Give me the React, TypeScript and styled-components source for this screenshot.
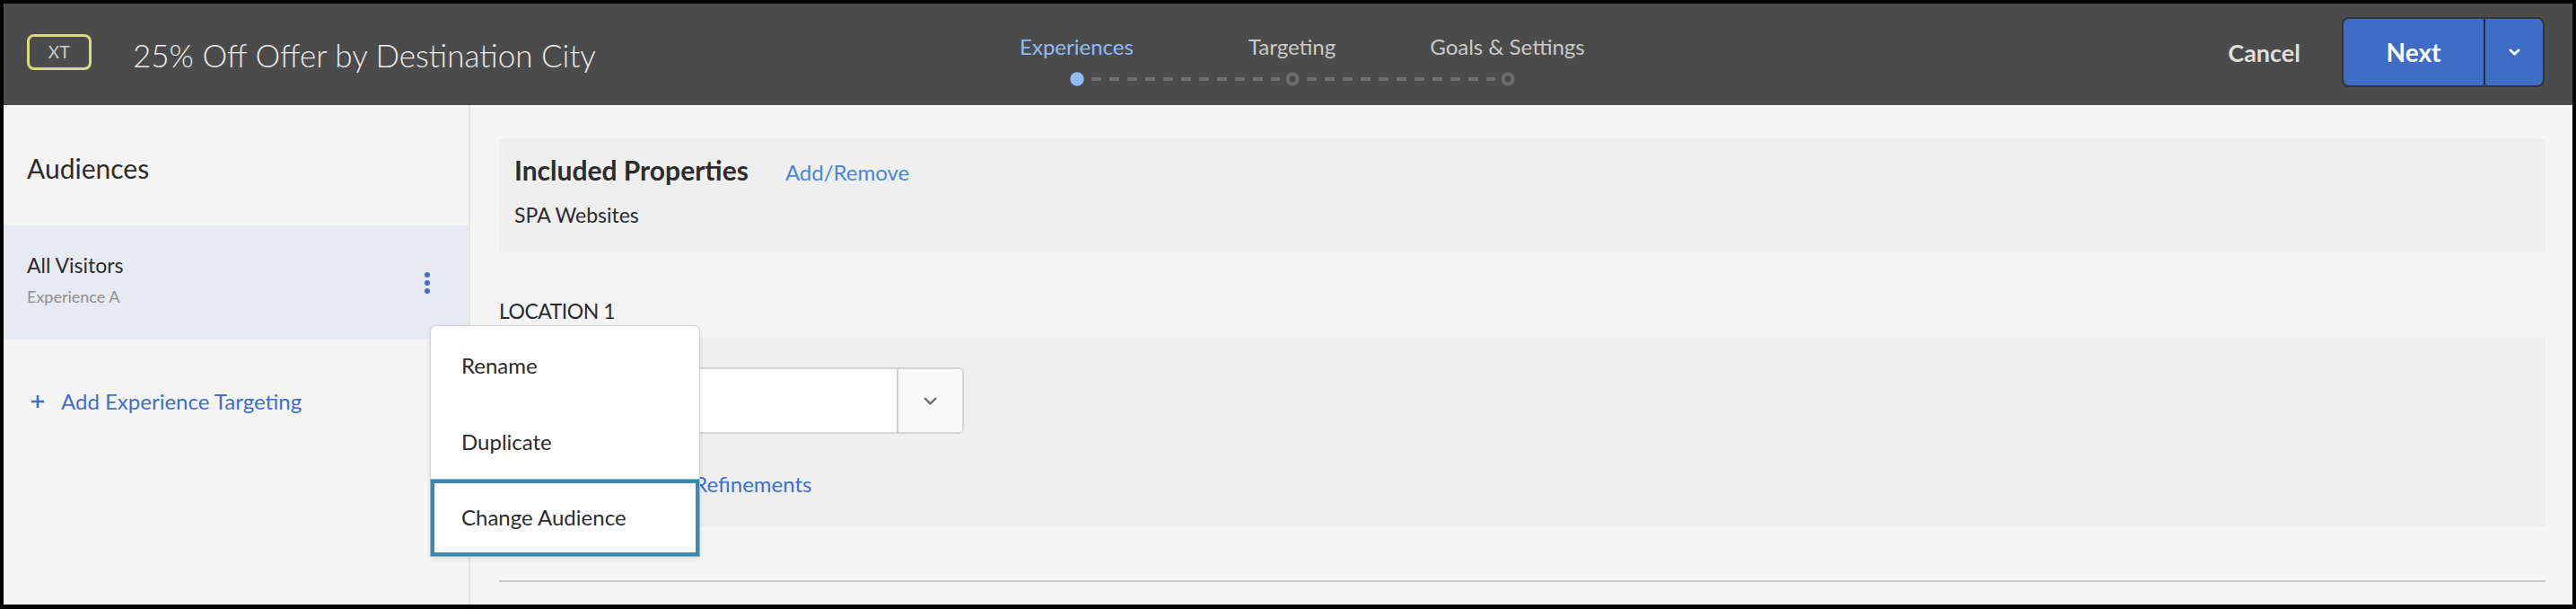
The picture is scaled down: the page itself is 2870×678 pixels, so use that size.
import styled, { createGlobalStyle } from "styled-components";

const GlobalStyle = createGlobalStyle`
  html, body {
    margin: 0;
    padding: 0;
  }
  body {
    background: #000;
    font-family: Lato, "Open Sans", sans-serif;
    color: #2c2c2c;
  }
  * {
    box-sizing: border-box;
  }
`;

const Frame = styled.div`
  width: 2870px;
  height: 678px;
  border: 4px solid #000;
  border-bottom-width: 5px;
  display: flex;
  flex-direction: column;
  background: #f5f5f5;
`;

const Header = styled.header`
  flex: none;
  height: 113px;
  background: #4b4b4b;
  display: grid;
  grid-template-columns: 1fr auto 1fr;
  align-items: center;
  padding: 0 31px 0 26px;
`;

const Brand = styled.div`
  display: flex;
  align-items: center;
  gap: 46px;
`;

const Badge = styled.div`
  width: 72px;
  height: 40px;
  margin-top: -6px;
  border: 3px solid #d6dc7d;
  border-radius: 8px;
  display: flex;
  align-items: center;
  justify-content: center;
  color: #cfcfcf;
  font-size: 19px;
  letter-spacing: 0.5px;
`;

const Title = styled.h1`
  margin: 0;
  font-size: 35px;
  font-weight: 300;
  color: #ececec;
  white-space: nowrap;
`;

const Stepper = styled.div`
  align-self: start;
  padding-top: 33px;
  margin-left: 14px;
  display: flex;
  flex-direction: column;
  align-items: center;
  gap: 12px;
`;

const StepLabels = styled.div`
  display: grid;
  grid-template-columns: repeat(3, 240px);
`;

const StepLabel = styled.span<{ $active?: boolean }>`
  text-align: center;
  font-size: 24px;
  line-height: 30px;
  color: ${(p) => (p.$active ? "#8fbcf7" : "#c9c9c9")};
  white-space: nowrap;
`;

const Actions = styled.div`
  margin-top: -5px;
  display: flex;
  justify-content: flex-end;
  align-items: center;
  gap: 46px;
`;

const CancelButton = styled.button`
  border: 0;
  background: none;
  padding: 0;
  font-family: inherit;
  font-size: 27px;
  font-weight: 700;
  color: #dedede;
`;

const SplitButton = styled.div`
  display: flex;
  height: 78px;
  border: 2px solid #333;
  border-radius: 8px;
  background: #3e6dc5;
  overflow: hidden;
`;

const SplitMain = styled.div`
  width: 158px;
  display: flex;
  align-items: center;
  justify-content: center;
  color: #fff;
  font-size: 28px;
  font-weight: 700;
  border-right: 2px solid #2c2c2c;
`;

const SplitToggle = styled.div`
  flex: 1;
  width: 64px;
  display: flex;
  align-items: center;
  justify-content: center;
`;

const Body = styled.div`
  flex: 1;
  display: flex;
  position: relative;
  min-height: 0;
`;

const Sidebar = styled.aside`
  flex: none;
  width: 520px;
  border-right: 2px solid #e4e4e4;
  display: flex;
  flex-direction: column;
`;

const SidebarTitle = styled.h2`
  margin: 0;
  height: 134px;
  padding: 52px 26px 0;
  font-size: 30px;
  line-height: 36px;
  font-weight: 400;
  color: #2c2c2c;
`;

const AudienceRow = styled.div<{ $selected?: boolean }>`
  height: 127px;
  padding: 0 42px 0 26px;
  display: flex;
  align-items: center;
  justify-content: space-between;
  background: ${(p) => (p.$selected ? "#e7eaf1" : "transparent")};
`;

const AudienceText = styled.div`
  display: flex;
  flex-direction: column;
  gap: 11px;
  margin-top: -7px;
`;

const AudienceName = styled.span`
  font-size: 23px;
  line-height: 26px;
  color: #2c2c2c;
`;

const AudienceSub = styled.span`
  font-size: 18px;
  line-height: 22px;
  color: #8f8f8f;
`;

const AddLink = styled.a<{ $gap?: number }>`
  display: flex;
  align-items: center;
  gap: ${(p) => p.$gap ?? 20}px;
  color: #3e6fcb;
  font-size: 24px;
  line-height: 30px;
  text-decoration: none;
  white-space: nowrap;
`;

const SidebarAdd = styled.div`
  padding: 54px 0 0 30px;
`;

const Main = styled.main`
  flex: 1;
  padding: 37px 30px 0 32px;
  display: flex;
  flex-direction: column;
`;

const Panel = styled.section<{ $pad: string }>`
  background: #efefef;
  padding: ${(p) => p.$pad};
  display: flex;
  flex-direction: column;
`;

const PanelHead = styled.div`
  display: flex;
  align-items: baseline;
  gap: 41px;
`;

const PanelTitle = styled.h3`
  margin: 0;
  font-size: 30px;
  line-height: 34px;
  font-weight: 700;
  color: #2c2c2c;
`;

const TextLink = styled.a`
  color: #4a86d8;
  font-size: 24px;
  text-decoration: none;
`;

const PanelText = styled.p`
  margin: 18px 0 0;
  font-size: 23px;
  line-height: 30px;
  color: #2c2c2c;
`;

const SectionLabel = styled.h4`
  margin: 51px 0 15px;
  font-size: 23px;
  line-height: 30px;
  font-weight: 400;
  letter-spacing: -0.5px;
  color: #2c2c2c;
`;

const Select = styled.div`
  width: 501px;
  height: 74px;
  border: 2px solid #d3d3d3;
  border-radius: 6px;
  background: #fff;
  display: flex;
  overflow: hidden;
`;

const SelectValue = styled.div`
  flex: 1;
`;

const SelectToggle = styled.div`
  width: 73px;
  border-left: 2px solid #d3d3d3;
  background: #fafafa;
  display: flex;
  align-items: center;
  justify-content: center;
`;

const Refinements = styled.div`
  margin-top: 41px;
  padding-left: 25px;
`;

const Rule = styled.hr`
  margin: 60px 0 0;
  border: 0;
  border-top: 2px solid #cacaca;
`;

const Menu = styled.ul`
  position: absolute;
  left: 476px;
  top: 246px;
  width: 299px;
  margin: 0;
  padding: 1px 0 0;
  list-style: none;
  background: #fff;
  border-radius: 6px 6px 2px 2px;
  box-shadow: 0 0 0 1px #d3d3d3, 0 2px 6px rgba(0, 0, 0, 0.15);
`;

const MenuItem = styled.li<{ $focused?: boolean }>`
  height: 85px;
  display: flex;
  align-items: center;
  padding-left: ${(p) => (p.$focused ? 30 : 34)}px;
  padding-bottom: ${(p) => (p.$focused ? 3 : 0)}px;
  font-size: 24px;
  color: #2c2c2c;
  border: ${(p) => (p.$focused ? "4px solid #3b88b1" : "0")};
  outline: ${(p) => (p.$focused ? "1px solid #8dbcd3" : "none")};
`;

const Chevron = ({ color, w, h, sw }: { color: string; w: number; h: number; sw: number }) => (
  <svg width={w} height={h} viewBox={`0 0 ${w} ${h}`} fill="none">
    <path
      d={`M${sw / 2 + 0.5} ${sw / 2 + 0.5} L${w / 2} ${h - sw / 2 - 0.5} L${w - sw / 2 - 0.5} ${sw / 2 + 0.5}`}
      stroke={color}
      strokeWidth={sw}
      strokeLinecap="round"
      strokeLinejoin="round"
    />
  </svg>
);

const Plus = () => (
  <svg width="16" height="16" viewBox="0 0 16 16">
    <path d="M8 1v14M1 8h14" stroke="#3e6fcb" strokeWidth="2.6" />
  </svg>
);

const Kebab = () => (
  <svg width="8" height="26" viewBox="0 0 8 26">
    <circle cx="4" cy="4" r="3" fill="#3e6fcb" />
    <circle cx="4" cy="13" r="3" fill="#3e6fcb" />
    <circle cx="4" cy="22" r="3" fill="#3e6fcb" />
  </svg>
);

const StepTrack = () => (
  <svg width="720" height="18" viewBox="0 0 720 18">
    <line x1="136" y1="9" x2="346" y2="9" stroke="#6f6f6f" strokeWidth="4" strokeDasharray="11 9" />
    <line x1="376" y1="9" x2="586" y2="9" stroke="#6f6f6f" strokeWidth="4" strokeDasharray="11 9" />
    <circle cx="120" cy="9" r="7.7" fill="#8fbcf7" />
    <circle cx="360" cy="9" r="5.6" fill="#4b4b4b" stroke="#6f6f6f" strokeWidth="3.8" />
    <circle cx="600" cy="9" r="5.6" fill="#4b4b4b" stroke="#6f6f6f" strokeWidth="3.8" />
  </svg>
);

const steps = ["Experiences", "Targeting", "Goals & Settings"];
const menuItems = ["Rename", "Duplicate", "Change Audience"];

export default function App() {
  return (
    <>
      <GlobalStyle />
      <Frame>
        <Header>
          <Brand>
            <Badge>XT</Badge>
            <Title>25% Off Offer by Destination City</Title>
          </Brand>
          <Stepper>
            <StepLabels>
              {steps.map((s, i) => (
                <StepLabel key={s} $active={i === 0}>
                  {s}
                </StepLabel>
              ))}
            </StepLabels>
            <StepTrack />
          </Stepper>
          <Actions>
            <CancelButton>Cancel</CancelButton>
            <SplitButton>
              <SplitMain>Next</SplitMain>
              <SplitToggle>
                <Chevron color="#fff" w={13} h={8} sw={2.6} />
              </SplitToggle>
            </SplitButton>
          </Actions>
        </Header>
        <Body>
          <Sidebar>
            <SidebarTitle>Audiences</SidebarTitle>
            <AudienceRow $selected>
              <AudienceText>
                <AudienceName>All Visitors</AudienceName>
                <AudienceSub>Experience A</AudienceSub>
              </AudienceText>
              <Kebab />
            </AudienceRow>
            <SidebarAdd>
              <AddLink $gap={18}>
                <Plus />
                Add Experience Targeting
              </AddLink>
            </SidebarAdd>
          </Sidebar>
          <Main>
            <Panel $pad="18px 17px 26px">
              <PanelHead>
                <PanelTitle>Included Properties</PanelTitle>
                <TextLink>Add/Remove</TextLink>
              </PanelHead>
              <PanelText>SPA Websites</PanelText>
            </Panel>
            <SectionLabel>LOCATION 1</SectionLabel>
            <Panel $pad="33px 17px 32px">
              <Select>
                <SelectValue />
                <SelectToggle>
                  <Chevron color="#6e6e6e" w={15} h={9} sw={2.2} />
                </SelectToggle>
              </Select>
              <Refinements>
                <AddLink $gap={14}>
                  <Plus />
                  Add Location Refinements
                </AddLink>
              </Refinements>
            </Panel>
            <Rule />
          </Main>
          <Menu>
            {menuItems.map((m, i) => (
              <MenuItem key={m} $focused={i === menuItems.length - 1}>
                {m}
              </MenuItem>
            ))}
          </Menu>
        </Body>
      </Frame>
    </>
  );
}
